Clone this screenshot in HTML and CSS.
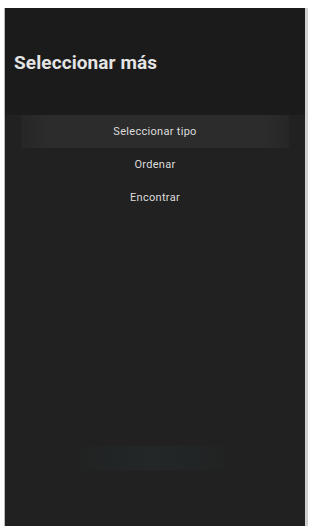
FILE: index.html
```html
<!DOCTYPE html>
<html lang="es">

<head>
    <meta charset="UTF-8">
    <meta name="viewport" content="width=device-width, initial-scale=1.0">
    <title>Seleccionar más</title>
    <link rel="stylesheet" href="styles.css">
</head>

<body>
    <div class="screen">

        <div class="screen-header">
            <h1 class="screen-title">Seleccionar más</h1>
        </div>

        <ul class="menu">
            <li class="menu-item selected">Seleccionar tipo</li>
            <li class="menu-item">Ordenar</li>
            <li class="menu-item">Encontrar</li>
        </ul>

        <div class="glow"></div>

    </div>
</body>

</html>
```

FILE: styles.css
```css
html {
    box-sizing: border-box;
}

*,
*::before,
*::after {
    box-sizing: inherit;
}

body {
    margin: 0;
    background-color: #fff;
    font-family: Roboto, "Liberation Sans", sans-serif;
}

.screen {
    margin: 8px 4px 0 4px;
    height: 518px;
    background-color: #212121;
    border-left: 1px solid #b9b9b9;
    border-right: 3px solid #cfcfcf;
    display: flex;
    flex-direction: column;
    overflow: hidden;
}

.screen-header {
    height: 107px;
    background-color: #1b1b1b;
    padding: 43px 0 0 9px;
}

.screen-title {
    margin: 0;
    font-size: 19px;
    font-weight: 700;
    color: #e4e4e4;
    letter-spacing: 0.1px;
}

.menu {
    list-style: none;
    margin: 0;
    padding: 0 16px;
}

.menu-item {
    height: 33px;
    line-height: 33px;
    text-align: center;
    font-size: 11px;
    letter-spacing: 0.3px;
    color: #dcdcdc;
}

.selected {
    background-image: linear-gradient(to right, #262626, #2c2c2c 10%, #2c2c2c 90%, #262626);
}

/* leve reflejo verde abajo */
.glow {
    margin: auto 80px 56px 76px;
    height: 24px;
    background-image: linear-gradient(to right, #212323, #232727 50%, #212323);
}
```
